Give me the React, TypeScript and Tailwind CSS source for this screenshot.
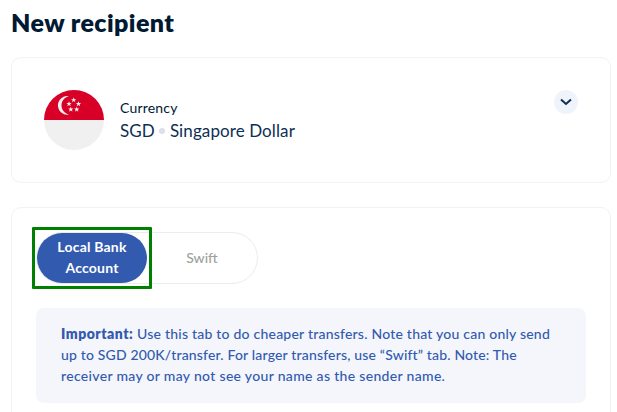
import React from "react";

const stars = [
  { x: 29.7, y: 10 },
  { x: 25, y: 13.9 },
  { x: 34.5, y: 13.9 },
  { x: 26.8, y: 19.4 },
  { x: 32.7, y: 19.4 },
];

const SingaporeFlag: React.FC = () => (
  <svg width="60" height="60" viewBox="0 0 60 60" className="shrink-0">
    <circle cx="30" cy="30" r="30" fill="#f0f0f0" />
    <path d="M0 30a30 30 0 0 1 60 0z" fill="#d80027" />
    <path d="M17.5 15.3c0-4.5 3.2-8.3 7.4-9.1a9.3 9.3 0 1 0 0 18.3c-4.2-.9-7.4-4.7-7.4-9.2z" fill="#f0f0f0" />
    {stars.map((star) => (
      <path
        key={`${star.x}-${star.y}`}
        transform={`translate(${star.x} ${star.y})`}
        d="M0-2.7.7-.8h1.9L1.1.4l.6 1.9L0 1.1l-1.7 1.2.6-1.9-1.5-1.2h1.9z"
        fill="#f0f0f0"
      />
    ))}
  </svg>
);

const CurrencyCard: React.FC = () => (
  <section className="flex h-[126px] items-start justify-between rounded-[10px] border border-[#f2f2f2] pt-8 pr-8 pl-8">
    <div className="flex items-start">
      <SingaporeFlag />
      <div className="ml-4 pt-2">
        <p className="text-[14px] leading-5 tracking-[0.2px] text-[#001a33]">Currency</p>
        <p className="flex items-center text-[17px] leading-[26px] tracking-[0.1px] text-[#0c2f55]">
          SGD
          <span className="mr-[5px] ml-1 size-1.5 rounded-full bg-[#dbe1ea]" />
          Singapore Dollar
        </p>
      </div>
    </div>
    <button className="flex size-6 items-center justify-center rounded-full bg-[#eff3fb]">
      <svg width="12" height="8" viewBox="0 0 12 8" fill="none" stroke="#0c2f55" strokeWidth="2">
        <path d="M1 1.5l5 4.5 5-4.5" />
      </svg>
    </button>
  </section>
);

const TransferTabs: React.FC = () => (
  <div className="h-[62px] w-[227px]">
    <div className="flex items-center">
      <div className="z-10 h-[62px] w-[120px] shrink-0 rounded-[1px] border-3 border-[#008000] px-0.5 py-[3px]">
        <button className="h-[50px] w-[110px] rounded-full bg-[#325aaf] px-4 pb-0.5 text-[14px] leading-[21px] font-bold tracking-[0.2px] text-white">
          Local Bank Account
        </button>
      </div>
      <button className="-ml-[116px] h-[52px] w-[222px] shrink-0 rounded-full border border-[#ececec] pb-0.5 pl-[110px] text-[14px] font-medium text-[#a0a0a0]">
        Swift
      </button>
    </div>
  </div>
);

const App: React.FC = () => {
  return (
    <main className="h-[412px] overflow-hidden bg-white pr-1.5 pl-[11px] font-['Lato',sans-serif]">
      <h1 className="h-[57px] pt-1 text-[25px] leading-[36px] font-extrabold tracking-[0.42px] text-[#001a33]">
        New recipient
      </h1>
      <CurrencyCard />
      <section className="mt-6 h-[240px] rounded-[10px] border border-[#f2f2f2] pt-[19px] pr-6 pl-5">
        <TransferTabs />
        <div className="mt-[19px] ml-1 h-[95px] rounded-lg bg-[#f4f6fc] pt-[15px] pl-[25px] text-[14px] leading-[21px] font-medium text-[#325aaf]">
          <p className="whitespace-nowrap tracking-[0.22px]">
            <b className="font-extrabold tracking-[0.5px]">Important:</b> Use this tab to do cheaper transfers. Note that you can only send
          </p>
          <p className="whitespace-nowrap tracking-[0.17px]">
            up to SGD 200K/transfer. For larger transfers, use “Swift” tab. Note: The
          </p>
          <p className="whitespace-nowrap tracking-[0.32px]">
            receiver may or may not see your name as the sender name.
          </p>
        </div>
      </section>
    </main>
  );
};

export default App;
